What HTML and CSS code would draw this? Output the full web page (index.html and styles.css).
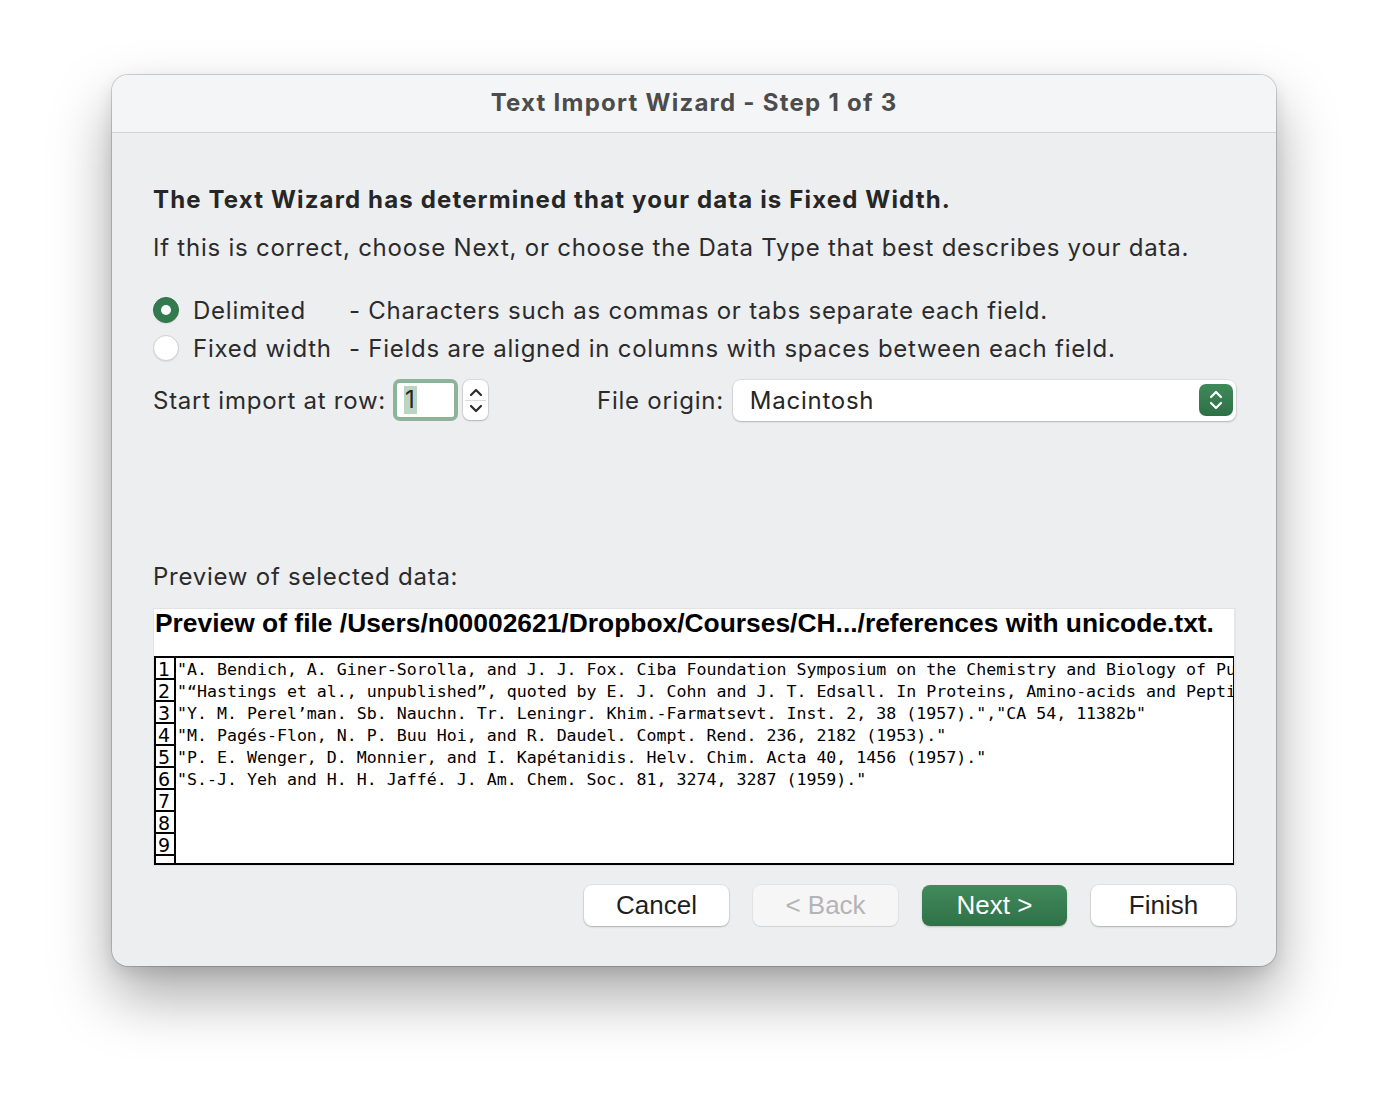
FILE: index.html
```html
<!DOCTYPE html>
<html>
<head>
<meta charset="utf-8">
<title>Text Import Wizard</title>
<link rel="stylesheet" href="styles.css">
</head>
<body>
<div class="window">
  <div class="titlebar">Text Import Wizard - Step 1 of 3</div>
  <div class="content">
    <h1 class="heading">The Text Wizard has determined that your data is Fixed Width.</h1>
    <p class="intro">If this is correct, choose Next, or choose the Data Type that best describes your data.</p>

    <div class="radios">
      <div class="radio-row">
        <span class="radio checked"></span>
        <span class="radio-label">Delimited</span>
        <span class="radio-desc">- Characters such as commas or tabs separate each field.</span>
      </div>
      <div class="radio-row">
        <span class="radio"></span>
        <span class="radio-label">Fixed width</span>
        <span class="radio-desc">- Fields are aligned in columns with spaces between each field.</span>
      </div>
    </div>

    <div class="options">
      <span class="opt-label">Start import at row:</span>
      <span class="field"><span class="field-inner"><span class="sel">1</span></span></span>
      <span class="stepper">
        <svg width="14" height="9" viewBox="0 0 14 9"><path d="M2 7 L7 2 L12 7" fill="none" stroke="#2b2b2b" stroke-width="2.2" stroke-linecap="round" stroke-linejoin="round"/></svg>
        <span class="stepper-line"></span>
        <svg width="14" height="9" viewBox="0 0 14 9"><path d="M2 2 L7 7 L12 2" fill="none" stroke="#2b2b2b" stroke-width="2.2" stroke-linecap="round" stroke-linejoin="round"/></svg>
      </span>
      <span class="opt-label origin-label">File origin:</span>
      <span class="select">
        <span class="select-text">Macintosh</span>
        <span class="select-btn">
          <svg width="16" height="24" viewBox="0 0 16 24"><path d="M3 9 L8 4 L13 9" fill="none" stroke="#fff" stroke-width="2.2" stroke-linecap="round" stroke-linejoin="round"/><path d="M3 15 L8 20 L13 15" fill="none" stroke="#fff" stroke-width="2.2" stroke-linecap="round" stroke-linejoin="round"/></svg>
        </span>
      </span>
    </div>

    <div class="preview-label">Preview of selected data:</div>

    <div class="preview">
      <div class="preview-head">Preview of file /Users/n00002621/Dropbox/Courses/CH.../references with unicode.txt.</div>
      <div class="grid">
        <div class="row"><span class="num">1</span><span class="txt">"A. Bendich, A. Giner-Sorolla, and J. J. Fox. Ciba Foundation Symposium on the Chemistry and Biology of Pu</span></div>
        <div class="row"><span class="num">2</span><span class="txt">"“Hastings et al., unpublished”, quoted by E. J. Cohn and J. T. Edsall. In Proteins, Amino-acids and Pepti</span></div>
        <div class="row"><span class="num">3</span><span class="txt">"Y. M. Perel’man. Sb. Nauchn. Tr. Leningr. Khim.-Farmatsevt. Inst. 2, 38 (1957).","CA 54, 11382b"</span></div>
        <div class="row"><span class="num">4</span><span class="txt">"M. Pagés-Flon, N. P. Buu Hoi, and R. Daudel. Compt. Rend. 236, 2182 (1953)."</span></div>
        <div class="row"><span class="num">5</span><span class="txt">"P. E. Wenger, D. Monnier, and I. Kapétanidis. Helv. Chim. Acta 40, 1456 (1957)."</span></div>
        <div class="row"><span class="num">6</span><span class="txt">"S.-J. Yeh and H. H. Jaffé. J. Am. Chem. Soc. 81, 3274, 3287 (1959)."</span></div>
        <div class="row"><span class="num">7</span><span class="txt"></span></div>
        <div class="row"><span class="num">8</span><span class="txt"></span></div>
        <div class="row"><span class="num">9</span><span class="txt"></span></div>
        <div class="row last"><span class="num"></span><span class="txt"></span></div>
      </div>
    </div>

    <div class="buttons">
      <button class="btn">Cancel</button>
      <button class="btn disabled">&lt; Back</button>
      <button class="btn primary">Next &gt;</button>
      <button class="btn">Finish</button>
    </div>
  </div>
</div>
</body>
</html>
```

FILE: styles.css
```css
html, body {
  margin: 0;
  padding: 0;
  background: #ffffff;
}
body {
  padding: 75px 0 148px 112px;
  min-height: 1114px;
  box-sizing: border-box;
  font-family: Inter, "Noto Sans", sans-serif;
  color: #262626;
}
.window {
  width: 1164px;
  height: 891px;
  box-sizing: border-box;
  background: #edeef0;
  border-radius: 16px;
  box-shadow: 0 0 0 1px rgba(0,0,0,0.16), 0 30px 60px rgba(0,0,0,0.34), 0 6px 16px rgba(0,0,0,0.1);
  overflow: hidden;
}
.titlebar {
  height: 57px;
  background: #f4f5f6;
  border-bottom: 1px solid #d3d3d5;
  text-align: center;
  font-size: 24px;
  font-weight: 700;
  line-height: 56px;
  color: #4c4c4c;
  letter-spacing: 1.25px;
}
.content {
  padding: 52px 40px 0 41px;
}
.heading {
  margin: 0;
  font-size: 24px;
  font-weight: 700;
  line-height: 30px;
  color: #262626;
  letter-spacing: 1.15px;
}
.intro {
  margin: 18px 0 0 0;
  font-size: 24px;
  line-height: 30px;
  color: #2b2b2b;
  letter-spacing: 0.76px;
}
.radios {
  margin-top: 28px;
}
.radio-row {
  display: flex;
  align-items: center;
  height: 38px;
  font-size: 24px;
  color: #2b2b2b;
  letter-spacing: 0.75px;
}
.radio {
  width: 26px;
  height: 26px;
  border-radius: 50%;
  box-sizing: border-box;
  background: #ffffff;
  border: 1px solid #cfcfd2;
  box-shadow: 0 1px 1px rgba(0,0,0,0.08);
  margin-right: 14px;
  flex: none;
  position: relative;
}
.radio.checked {
  background: #347a4f;
  border-color: #2f6f48;
}
.radio.checked::after {
  content: "";
  position: absolute;
  left: 50%;
  top: 50%;
  width: 10px;
  height: 10px;
  margin: -5px 0 0 -5px;
  border-radius: 50%;
  background: #ffffff;
}
.radio-label {
  width: 156px;
  flex: none;
}
.options {
  display: flex;
  align-items: center;
  margin-top: 12px;
  height: 42px;
  font-size: 24px;
  color: #2b2b2b;
  letter-spacing: 0.75px;
}
.opt-label {
  flex: none;
}
.field {
  margin-left: 7px;
  width: 65px;
  height: 42px;
  box-sizing: border-box;
  border-radius: 7px;
  background: #8db39a;
  padding: 4px;
  flex: none;
}
.field-inner {
  display: flex;
  align-items: center;
  height: 100%;
  background: #ffffff;
  border-radius: 2px;
  padding-left: 7px;
  font-size: 24px;
  color: #262626;
}
.sel {
  background: #bcd5c3;
  line-height: 28px;
  padding: 0 1px;
}
.stepper {
  margin-left: 5px;
  width: 25px;
  height: 40px;
  box-sizing: border-box;
  background: #ffffff;
  border-radius: 7px;
  box-shadow: 0 0 0 1px rgba(0,0,0,0.08), 0 1px 2px rgba(0,0,0,0.18);
  display: flex;
  flex-direction: column;
  align-items: center;
  justify-content: center;
  gap: 3px;
  flex: none;
}
.stepper-line {
  width: 21px;
  height: 1px;
  background: #dcdcdc;
}
.origin-label {
  margin-left: 109px;
}
.select {
  margin-left: 9px;
  flex: 1;
  height: 41px;
  box-sizing: border-box;
  background: #ffffff;
  border-radius: 8px;
  box-shadow: 0 0 0 1px rgba(0,0,0,0.06), 0 1px 2px rgba(0,0,0,0.2);
  display: flex;
  align-items: center;
  padding: 0 3px 0 17px;
}
.select-text {
  flex: 1;
  font-size: 24px;
  color: #262626;
}
.select-btn {
  width: 34px;
  height: 32px;
  border-radius: 7px;
  background: linear-gradient(#3f8a5b, #2e6f47);
  display: flex;
  align-items: center;
  justify-content: center;
}
.preview-label {
  margin-top: 141px;
  font-size: 24px;
  line-height: 30px;
  color: #2b2b2b;
  letter-spacing: 0.75px;
}
.preview {
  margin-top: 16px;
  height: 258px;
  box-sizing: border-box;
  background: #ffffff;
  border: 1px solid #e2e2e4;
  border-right: 2px solid #e6e6e8;
  display: flex;
  flex-direction: column;
  overflow: hidden;
}
.preview-head {
  font-family: "Liberation Sans", Arial, sans-serif;
  font-weight: 700;
  font-size: 26.4px;
  line-height: 28px;
  color: #000000;
  padding: 0 0 0 1px;
  white-space: nowrap;
  overflow: hidden;
  height: 28px;
}
.grid {
  margin-top: 19px;
  flex: 1;
  border: 2px solid #000000;
  margin-right: -1px;
  overflow: hidden;
  display: flex;
  flex-direction: column;
}
.row {
  display: flex;
  height: 22px;
  flex: none;
}
.row.last {
  flex: 1;
}
.num {
  width: 20px;
  box-sizing: border-box;
  border-right: 2px solid #000000;
  border-bottom: 2px solid #000000;
  font-family: "DejaVu Sans", sans-serif;
  font-size: 19px;
  line-height: 22px;
  padding-left: 2px;
  color: #000000;
  flex: none;
}
.row.last .num {
  border-bottom: none;
}
.txt {
  flex: 1;
  padding: 1px 0 0 1px;
  font-family: "DejaVu Sans Mono", "Liberation Mono", monospace;
  font-size: 16.6px;
  line-height: 22px;
  color: #000000;
  white-space: pre;
  overflow: hidden;
}
.buttons {
  display: flex;
  justify-content: flex-end;
  gap: 24px;
  margin-top: 19px;
}
.btn {
  width: 145px;
  height: 41px;
  border: none;
  border-radius: 8px;
  background: #ffffff;
  box-shadow: 0 0 0 1px rgba(0,0,0,0.05), 0 1px 2px rgba(0,0,0,0.22);
  font-family: "Liberation Sans", Arial, sans-serif;
  font-size: 26px;
  color: #1f1f1f;
  padding: 0;
  line-height: 41px;
}
.btn.disabled {
  background: #f6f6f7;
  color: #b4b4b6;
  box-shadow: 0 0 0 1px rgba(0,0,0,0.04), 0 1px 1px rgba(0,0,0,0.08);
}
.btn.primary {
  background: linear-gradient(#428a5c, #2f7147);
  color: #ffffff;
  box-shadow: 0 1px 2px rgba(0,0,0,0.2);
}
```
